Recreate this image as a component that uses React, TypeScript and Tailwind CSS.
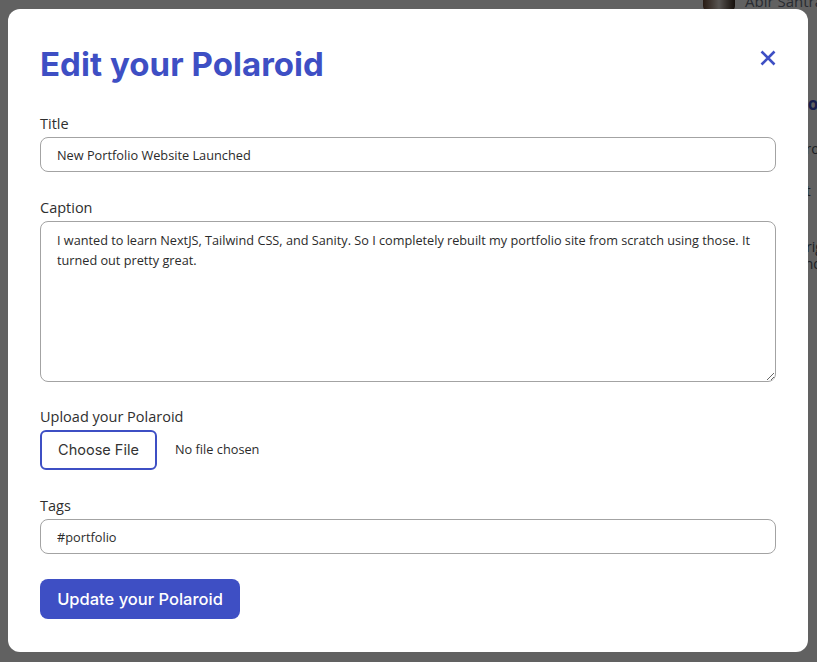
import { useState } from "react";

const blue = "#3e4fc4";

function Field({ label, children }: { label: string; children: React.ReactNode }) {
  return (
    <div className="flex flex-col">
      <label className="mb-[3px] text-[14.5px] leading-5 text-[#2f2f2f]">{label}</label>
      {children}
    </div>
  );
}

export default function App() {
  const [title, setTitle] = useState("New Portfolio Website Launched");
  const [caption, setCaption] = useState(
    "I wanted to learn NextJS, Tailwind CSS, and Sanity. So I completely rebuilt my portfolio site from scratch using those. It turned out pretty great.",
  );
  const [tags, setTags] = useState("#portfolio");

  return (
    <div className="relative h-[662px] w-full overflow-hidden bg-white font-['Open_Sans',sans-serif]">
      {/* page underneath the modal */}
      <div className="flex flex-col items-end">
        <div className="-mt-[10px] flex w-[114px] items-center gap-[10px] whitespace-nowrap">
          <div className="h-[22px] w-[32px] shrink-0 rounded-b-md bg-gradient-to-r from-[#6b4a35] via-[#e8e0d8] to-[#3a2a1e]" />
          <span className="text-[15px] text-gray-500">Abir Santra</span>
        </div>
        <div className="mt-[79px] flex w-[20px] flex-col text-[14px] text-gray-600">
          <span className="whitespace-nowrap text-[17px] leading-6 font-bold text-[#3e4fc4]">Polaroids</span>
          <span className="mt-[23px] whitespace-nowrap leading-5">Project</span>
          <span className="mt-[22px] whitespace-nowrap leading-5">At</span>
          <span className="mt-[37px] whitespace-nowrap leading-[17px]">Bright</span>
          <span className="whitespace-nowrap leading-[17px]">and l</span>
        </div>
      </div>

      {/* modal */}
      <div className="fixed inset-0 bg-black/[0.62] pl-2 pt-[9px]">
        <div className="w-[800px] rounded-xl bg-white px-8 pb-[33px] pt-[35px]">
          <div className="flex items-start justify-between">
            <h2
              className="text-[33px] font-bold leading-10 tracking-[0.05px] font-['Inter',sans-serif]"
              style={{ color: blue }}
            >
              Edit your Polaroid
            </h2>
            <button className="mt-[6px]" aria-label="Close">
              <svg width="16" height="16" viewBox="0 0 16 16" fill="none">
                <path d="M1.5 1.5L14.5 14.5M14.5 1.5L1.5 14.5" stroke={blue} strokeWidth="2.6" />
              </svg>
            </button>
          </div>

          <div className="mt-[30px] flex flex-col">
            <Field label="Title">
              <input
                value={title}
                onChange={(e) => setTitle(e.target.value)}
                className="h-[35px] rounded-lg border border-[#a3a3a3] px-4 text-[12.75px] text-[#2b2b2b] outline-none"
              />
            </Field>

            <div className="mt-[26px]">
              <Field label="Caption">
                <textarea
                  value={caption}
                  onChange={(e) => setCaption(e.target.value)}
                  className="h-[161px] rounded-lg border border-[#a3a3a3] py-2 pl-4 pr-3 text-[12.7px] leading-5 text-[#2b2b2b] outline-none"
                />
              </Field>
            </div>

            <div className="mt-[25px]">
              <Field label="Upload your Polaroid">
                <div className="flex items-center">
                  <span className="flex h-10 w-[117px] items-center justify-center rounded-md border-2 border-[#3e4fc4] text-[14.5px] text-[#333] font-['Inter',sans-serif]">
                    Choose File
                  </span>
                  <span className="ml-[18px] text-[12.75px] text-[#2b2b2b]">No file chosen</span>
                </div>
              </Field>
            </div>

            <div className="mt-[26px]">
              <Field label="Tags">
                <input
                  value={tags}
                  onChange={(e) => setTags(e.target.value)}
                  className="h-[35px] rounded-lg border border-[#a3a3a3] px-4 text-[12.75px] text-[#2b2b2b] outline-none"
                />
              </Field>
            </div>

            <div className="mt-[25px]">
              <button className="h-10 w-[200px] rounded-lg bg-[#3e4fc4] text-[16.5px] font-medium text-white font-['Inter',sans-serif]">
                Update your Polaroid
              </button>
            </div>
          </div>
        </div>
      </div>
    </div>
  );
}
